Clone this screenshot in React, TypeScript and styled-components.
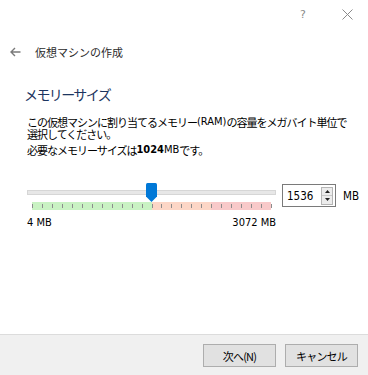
import React from "react";
import styled, { createGlobalStyle } from "styled-components";

const GlobalStyle = createGlobalStyle`
  html, body {
    margin: 0;
    padding: 0;
    background: #ffffff;
  }
  body {
    font-family: "Noto Sans CJK JP", "Noto Sans", sans-serif;
    color: #000;
  }
`;

const Window = styled.div`
  width: 368px;
  height: 375px;
  display: flex;
  flex-direction: column;
  background: #ffffff;
  overflow: hidden;
`;

const TitleBar = styled.div`
  height: 28px;
  display: flex;
  justify-content: flex-end;
  align-items: center;
  padding-right: 14px;
  gap: 30px;
`;

const TitleIcon = styled.span`
  width: 14px;
  height: 14px;
  display: flex;
  align-items: center;
  justify-content: center;
  color: #8a8a8a;
  font-family: "DejaVu Sans", sans-serif;
  font-size: 11px;
`;

const NavRow = styled.div`
  display: flex;
  align-items: center;
  height: 20px;
  margin-top: 14px;
  padding-left: 10px;
  gap: 14px;
`;

const NavTitle = styled.span`
  font-size: 11px;
  color: #2b2b2b;
`;

const Content = styled.div`
  padding-left: 24px;
`;

const Heading = styled.h1`
  margin: 23px 0 0;
  font-size: 14px;
  font-weight: 400;
  line-height: 18px;
  color: #1c3560;
  letter-spacing: -1.6px;
`;

const Body = styled.div`
  padding-left: 3px;
  margin-top: 13px;
`;

const Para = styled.p<{ $gap?: number }>`
  margin: ${(p) => p.$gap ?? 0}px 0 0;
  height: 12px;
  display: flex;
  align-items: center;
  font-size: 11px;
  line-height: 12px;
  letter-spacing: -1px;
  white-space: nowrap;
  color: #000;
`;

const Bold = styled.b`
  font-family: "DejaVu Sans Condensed", "DejaVu Sans", sans-serif;
  font-weight: 700;
  letter-spacing: 0;
`;

const Latin = styled.span`
  font-family: "DejaVu Sans Condensed", "DejaVu Sans", sans-serif;
  letter-spacing: 0;
`;

const SliderRow = styled.div`
  display: flex;
  align-items: flex-start;
  margin-top: 27px;
`;

const SliderCol = styled.div`
  width: 249px;
  flex-shrink: 0;
  margin-left: 3px;
  display: flex;
  flex-direction: column;
`;

const Track = styled.div`
  position: relative;
  height: 19px;
`;

const Groove = styled.div`
  position: absolute;
  left: 0;
  right: 0;
  top: 7px;
  height: 3px;
  background: #e7e7e7;
  border: 1px solid #d6d6d6;
`;

const Thumb = styled.svg`
  position: absolute;
  top: 0;
  width: 11px;
  height: 19px;
`;

const Scale = styled.div`
  position: relative;
  margin: 0 5px;
  height: 8px;
  display: flex;
`;

const Zone = styled.div<{ $bg: string; $w: number }>`
  width: ${(p) => p.$w}%;
  background: ${(p) => p.$bg};
`;

const Tick = styled.div`
  position: absolute;
  top: 2px;
  width: 1px;
  height: 4px;
  background: #8c8c8c;
`;

const Limits = styled.div`
  display: flex;
  justify-content: space-between;
  margin-top: 6px;
  font-family: "DejaVu Sans Condensed", "DejaVu Sans", sans-serif;
  font-size: 11px;
  line-height: 14px;
  color: #000;
`;

const SpinGroup = styled.div`
  display: flex;
  align-items: center;
  flex-shrink: 0;
  margin-left: 6px;
  margin-top: 1px;
  gap: 7px;
`;

const SpinBox = styled.div`
  width: 46px;
  height: 21px;
  border: 1px solid #7a7a7a;
  display: flex;
  align-items: center;
  justify-content: space-between;
  padding: 0 2px 0 4px;
  box-sizing: content-box;
  background: #fff;
`;

const SpinValue = styled.span`
  font-family: "DejaVu Sans Condensed", "DejaVu Sans", sans-serif;
  font-size: 11.5px;
`;

const SpinButtons = styled.div`
  width: 12px;
  height: 18px;
  display: flex;
  flex-direction: column;
  border: 1px solid #b5b5b5;
  background: #ececec;
  box-sizing: border-box;
`;

const SpinHalf = styled.div<{ $top?: boolean }>`
  flex: 1;
  display: flex;
  align-items: center;
  justify-content: center;
  border-bottom: ${(p) => (p.$top ? "1px solid #c8c8c8" : "none")};
`;

const Unit = styled.span`
  font-family: "DejaVu Sans Condensed", "DejaVu Sans", sans-serif;
  font-size: 11.5px;
`;

const Spacer = styled.div`
  flex: 1;
`;

const Footer = styled.div`
  height: 41px;
  background: #f0f0f0;
  border-top: 1px solid #dcdcdc;
  display: flex;
  justify-content: flex-end;
  align-items: flex-start;
  gap: 9px;
  padding: 9px 10px 0 0;
  box-sizing: border-box;
`;

const Button = styled.button`
  width: 73px;
  height: 23px;
  background: #e1e1e1;
  border: 1px solid #adadad;
  font-family: "Noto Sans CJK JP", sans-serif;
  font-size: 11px;
  letter-spacing: -0.8px;
  color: #000;
  padding: 0;
`;

const ticks = Array.from({ length: 25 }, (_, i) => i / 24);

export default function App() {
  const min = 4;
  const max = 3072;
  const value = 1536;
  const pos = (value - min) / (max - min);

  return (
    <Window>
      <GlobalStyle />
      <TitleBar>
        <TitleIcon>?</TitleIcon>
        <TitleIcon>
          <svg width="11" height="11" viewBox="0 0 11 11">
            <path d="M0.5 0.5 L10.5 10.5 M10.5 0.5 L0.5 10.5" stroke="#8a8a8a" strokeWidth="1" />
          </svg>
        </TitleIcon>
      </TitleBar>

      <NavRow>
        <svg width="11" height="10" viewBox="0 0 11 10">
          <path d="M5 1 L1 5 L5 9 M1 5 H10.5" stroke="#7a7a7a" strokeWidth="1.4" fill="none" />
        </svg>
        <NavTitle>仮想マシンの作成</NavTitle>
      </NavRow>

      <Content>
        <Heading>メモリーサイズ</Heading>
        <Body>
          <Para>
            この仮想マシンに割り当てるメモリー<Latin>(RAM)</Latin>の容量をメガバイト単位で
          </Para>
          <Para>選択してください。</Para>
          <Para $gap={4}>
            必要なメモリーサイズは<Bold>1024</Bold>
            <Latin>MB</Latin>です。
          </Para>
        </Body>

        <SliderRow>
          <SliderCol>
            <Track>
              <Groove />
              <Thumb viewBox="0 0 11 19" style={{ left: `calc(${pos * 100}% - ${pos * 10 + 0.5}px)` }}>
                <path
                  d="M0 1.5 Q0 0 1.5 0 H9.5 Q11 0 11 1.5 V13.5 L5.5 19 L0 13.5 Z"
                  fill="#0078d7"
                />
              </Thumb>
            </Track>
            <Scale>
              <Zone $bg="#c9f2c3" $w={50} />
              <Zone $bg="#fcd6c6" $w={25} />
              <Zone $bg="#f8c9c9" $w={25} />
              {ticks.map((t) => (
                <Tick key={t} style={{ left: `${t * 100}%` }} />
              ))}
            </Scale>
            <Limits>
              <span>4 MB</span>
              <span>3072 MB</span>
            </Limits>
          </SliderCol>

          <SpinGroup>
            <SpinBox>
              <SpinValue>1536</SpinValue>
              <SpinButtons>
                <SpinHalf $top>
                  <svg width="5" height="3" viewBox="0 0 5 3">
                    <path d="M2.5 0 L5 3 H0 Z" fill="#222" />
                  </svg>
                </SpinHalf>
                <SpinHalf>
                  <svg width="5" height="3" viewBox="0 0 5 3">
                    <path d="M0 0 H5 L2.5 3 Z" fill="#222" />
                  </svg>
                </SpinHalf>
              </SpinButtons>
            </SpinBox>
            <Unit>MB</Unit>
          </SpinGroup>
        </SliderRow>
      </Content>

      <Spacer />

      <Footer>
        <Button>次へ(N)</Button>
        <Button>キャンセル</Button>
      </Footer>
    </Window>
  );
}
